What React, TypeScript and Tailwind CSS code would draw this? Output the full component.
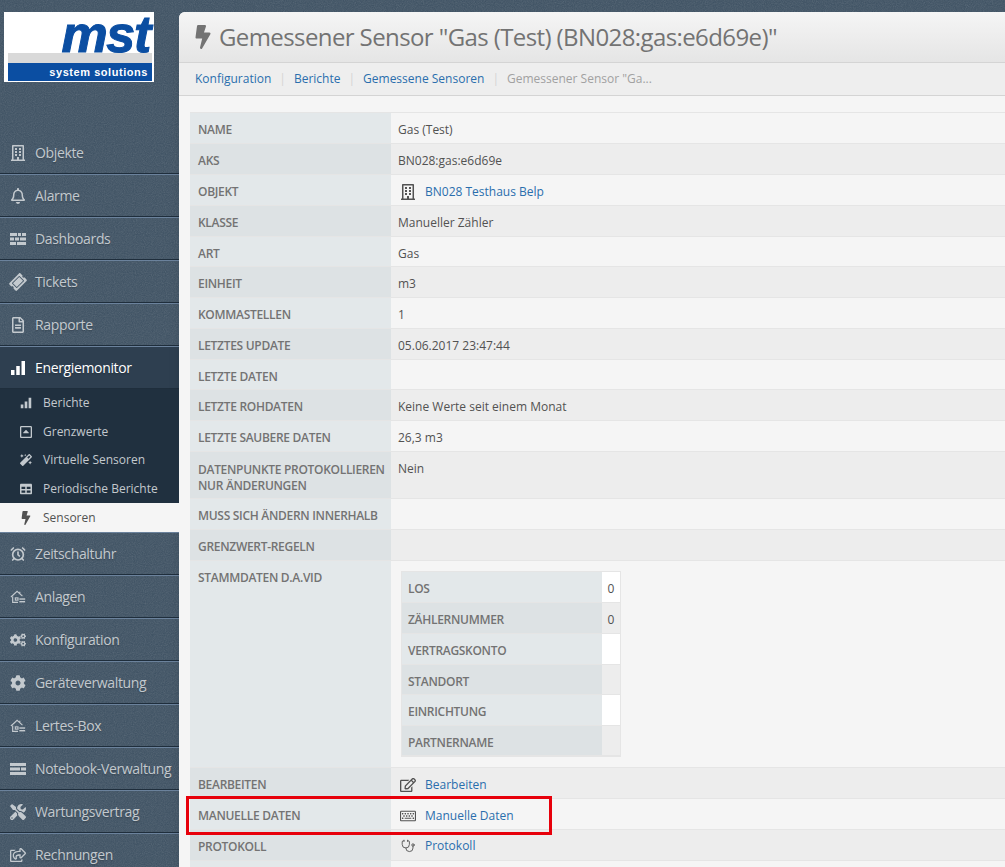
import React from "react";
import {
  FaRegBuilding, FaRegBell, FaTicketAlt, FaRegFileAlt, FaBolt, FaMagic, FaTable,
  FaCogs, FaCog, FaTools, FaRegShareSquare, FaRegEdit, FaRegKeyboard,
  FaRegCaretSquareUp,
} from "react-icons/fa";
import { AlarmClock, Stethoscope } from "lucide-react";

const font = { fontFamily: '"Open Sans", "DejaVu Sans", sans-serif' };

const Bars = () => (
  <svg viewBox="0 0 16 16" width="1em" height="1em" fill="currentColor">
    <rect x="1" y="10" width="3.5" height="5" />
    <rect x="6.25" y="6" width="3.5" height="9" />
    <rect x="11.5" y="1" width="3.5" height="14" />
  </svg>
);
const Bricks = () => (
  <svg viewBox="0 0 16 16" width="1em" height="1em" fill="currentColor">
    <rect x="0" y="2" width="7" height="3" /><rect x="8" y="2" width="3" height="3" /><rect x="12" y="2" width="4" height="3" />
    <rect x="0" y="6.5" width="4" height="3" /><rect x="5" y="6.5" width="4" height="3" /><rect x="10" y="6.5" width="6" height="3" />
    <rect x="0" y="11" width="6" height="3" /><rect x="7" y="11" width="9" height="3" />
  </svg>
);
const Stack = () => (
  <svg viewBox="0 0 16 16" width="1em" height="1em" fill="currentColor">
    <rect x="0" y="2" width="16" height="3" /><rect x="0" y="6.5" width="10" height="3" /><rect x="11" y="6.5" width="5" height="3" /><rect x="0" y="11" width="16" height="3" />
  </svg>
);
const HouseKey = () => (
  <svg viewBox="0 0 18 16" width="1.1em" height="1em" fill="none" stroke="currentColor" strokeWidth="1.3">
    <path d="M1 8 L8 1.5 L14 7" />
    <path d="M11 2 V4" />
    <path d="M3 7.5 V14 H9" />
    <rect x="6" y="9" width="3" height="2.5" />
    <rect x="10.5" y="9.5" width="6.5" height="1.6" fill="currentColor" stroke="none" />
    <rect x="10.5" y="12.5" width="6.5" height="1.6" fill="currentColor" stroke="none" />
  </svg>
);
const Clock = () => <AlarmClock size="1em" strokeWidth={2.5} />;
const Steth = () => <Stethoscope size="0.9em" strokeWidth={1.5} />;

function Nav({ icon: Icon, label, active = false, first = false }: { icon: any; label: string; active?: boolean; first?: boolean }) {
  return (
    <div
      className={`flex h-[43px] items-center gap-2.25 whitespace-nowrap pl-2.5 text-sm tracking-tight text-shadow-sm border-b border-b-[#1f2e3c] border-t ${first ? "border-t-transparent" : "border-t-[#6b829c]"} ${active ? "bg-[#2e3f50] text-white" : "text-[#c3c9ce]"}`}
    >
      <span className="flex w-4 justify-center text-base"><Icon /></span>
      <span>{label}</span>
    </div>
  );
}

function Sub({ icon: Icon, label, active = false }: { icon: any; label: string; active?: boolean }) {
  return (
    <div className={`flex items-center gap-2.75 pl-5 text-xs ${active ? "bg-neutral-100 text-neutral-600" : "text-[#c3c9ce]"}`}>
      <span className="flex w-3 justify-center text-sm"><Icon /></span>
      <span>{label}</span>
    </div>
  );
}

type RowT = { k: React.ReactNode; id: string; v?: React.ReactNode; tight?: boolean };

function Link({ icon: Icon, children }: { icon: any; children: React.ReactNode }) {
  return (
    <span className="-my-px ml-0.5 flex items-center gap-2.25">
      <span className="flex w-4 justify-center text-base text-neutral-600"><Icon /></span>
      <span className="text-[#2a6ead]">{children}</span>
    </span>
  );
}

function Row({ k, v, even, inner, two, tight }: { k: React.ReactNode; v?: React.ReactNode; even: boolean; inner?: boolean; two?: boolean; tight?: boolean }) {
  const pb = tight ? "pb-1.25" : "pb-1.5";
  return (
    <div className={`flex border-b border-neutral-200 ${even ? "bg-neutral-100" : "bg-[#ededed]"}`}>
      <div className={`${inner ? "flex-1 px-1.5" : "w-[201px] shrink-0 px-2"} whitespace-nowrap pt-2.5 text-xs font-semibold uppercase tracking-tight ${two ? "pb-1 leading-4" : `${pb} leading-3.5`} text-neutral-500 ${even ? "bg-[#e3e8ea]" : "bg-[#dde2e4]"}`}>
        {k}
      </div>
      <div className={`${inner ? "w-[18px] text-center" : "flex-1 pl-1.75"} ${pb} pt-2.5 text-xs leading-3.5 text-neutral-600 ${inner && even ? "bg-white" : ""}`}>{v}</div>
    </div>
  );
}

const nestedRows = [
  ["Los", "0"], ["Zählernummer", "0"], ["Vertragskonto", ""], ["Standort", ""], ["Einrichtung", ""], ["Partnername", ""],
];

export default function App() {
  const rows: RowT[] = [
    { id: "a", k: "Name", v: "Gas (Test)" },
    { id: "b", k: "AKS", v: "BN028:gas:e6d69e" },
    { id: "c", k: "Objekt", v: <Link icon={FaRegBuilding}>BN028 Testhaus Belp</Link> },
    { id: "d", k: "Klasse", v: "Manueller Zähler" },
    { id: "e", k: "Art", v: "Gas", tight: true },
    { id: "f", k: "Einheit", v: "m3" },
    { id: "g", k: "Kommastellen", v: "1" },
    { id: "h", k: "Letztes Update", v: "05.06.2017 23:47:44" },
    { id: "i", k: "Letzte Daten", tight: true },
    { id: "j", k: "Letzte Rohdaten", v: "Keine Werte seit einem Monat" },
    { id: "k", k: "Letzte saubere Daten", v: "26,3 m3" },
    { id: "two", k: <>Datenpunkte protokollieren<br />nur Änderungen</>, v: "Nein" },
    { id: "m", k: "Muss sich ändern innerhalb" },
    { id: "n", k: "Grenzwert-Regeln" },
  ];
  const after: RowT[] = [
    { id: "p", k: "Bearbeiten", v: <Link icon={FaRegEdit}>Bearbeiten</Link> },
    { id: "q", k: "Manuelle Daten", v: <Link icon={FaRegKeyboard}>Manuelle Daten</Link> },
    { id: "r", k: "Protokoll", v: <Link icon={Steth}>Protokoll</Link> },
    { id: "s", k: "" },
  ];
  return (
    <div className="relative flex h-[867px] overflow-hidden bg-[#3c5062]" style={font}>
      <svg className="absolute inset-0 h-full w-full opacity-20" aria-hidden="true">
        <filter id="grain">
          <feTurbulence type="fractalNoise" baseFrequency="0.9" numOctaves="2" />
          <feColorMatrix type="saturate" values="0" />
        </filter>
        <rect width="100%" height="100%" filter="url(#grain)" />
      </svg>
      <aside className="relative w-[179px] shrink-0">
        <div className="ml-1 mt-3 flex h-[70px] w-[150px] flex-col bg-white">
          <div className="flex h-[41px] justify-end pr-1 pt-0.5">
            <span className="text-[52px] font-bold italic leading-10 tracking-tight text-[#0b4ea2] [-webkit-text-stroke:1px_#0b4ea2]" style={{ fontFamily: '"Liberation Sans", sans-serif' }}>mst</span>
          </div>
          <div className="ml-1 h-2.5 w-[144px] bg-[#d9d9d9]" />
          <div className="ml-1 flex h-[18px] w-[144px] items-center justify-end bg-[#0b4ea2] pr-1 text-[11px] font-bold tracking-wider text-white" style={{ fontFamily: '"Liberation Sans", sans-serif' }}>
            system solutions
          </div>
        </div>
        <div className="mt-[49px]">
          <Nav first icon={FaRegBuilding} label="Objekte" />
          <Nav icon={FaRegBell} label="Alarme" />
          <Nav icon={Bricks} label="Dashboards" />
          <Nav icon={() => <FaTicketAlt className="-rotate-45" />} label="Tickets" />
          <Nav icon={FaRegFileAlt} label="Rapporte" />
          <Nav active icon={Bars} label="Energiemonitor" />
          <div className="relative z-20 grid h-[143px] grid-rows-5 bg-[#20303f]">
            <Sub icon={Bars} label="Berichte" />
            <Sub icon={FaRegCaretSquareUp} label="Grenzwerte" />
            <Sub icon={FaMagic} label="Virtuelle Sensoren" />
            <Sub icon={FaTable} label="Periodische Berichte" />
            <Sub active icon={FaBolt} label="Sensoren" />
          </div>
          <Nav icon={Clock} label="Zeitschaltuhr" />
          <Nav icon={HouseKey} label="Anlagen" />
          <Nav icon={FaCogs} label="Konfiguration" />
          <Nav icon={FaCog} label="Geräteverwaltung" />
          <Nav icon={HouseKey} label="Lertes-Box" />
          <Nav icon={Stack} label="Notebook-Verwaltung" />
          <Nav icon={FaTools} label="Wartungsvertrag" />
          <Nav icon={FaRegShareSquare} label="Rechnungen" />
        </div>
      </aside>
      <main className="relative z-10 mt-3 min-w-0 flex-1 rounded-tl-md bg-neutral-100 shadow-lg">
        <div className="flex h-[51px] items-center gap-1 rounded-tl-md border-b border-neutral-300 bg-gradient-to-b from-neutral-100 to-neutral-200 pl-3 text-2xl tracking-tight text-neutral-500">
          <FaBolt />
          <span className="whitespace-nowrap">Gemessener Sensor "Gas (Test) (BN028:gas:e6d69e)"</span>
        </div>
        <div className="flex h-[33px] items-center border-b border-neutral-300 bg-[#eeeeee] pl-4 text-xs">
          <span className="text-[#2a6ead]">Konfiguration</span>
          <span className="mx-2 text-neutral-300">|</span>
          <span className="text-[#2a6ead]">Berichte</span>
          <span className="mx-2 text-neutral-300">|</span>
          <span className="text-[#2a6ead]">Gemessene Sensoren</span>
          <span className="mx-2 text-neutral-300">|</span>
          <span className="text-neutral-400">Gemessener Sensor "Ga...</span>
        </div>
        <div className="ml-[11px] mt-4 border-t border-neutral-200">
          {rows.map((r, i) => <Row key={r.id} k={r.k} v={r.v} tight={r.tight} two={r.id === "two"} even={i % 2 === 0} />)}
          <div className="flex border-b border-neutral-200 bg-neutral-100">
            <div className="w-[201px] shrink-0 bg-[#e3e8ea] px-2 pt-2.5 text-xs font-semibold uppercase leading-3.5 tracking-tight text-neutral-500">Stammdaten d.a.vid</div>
            <div className="flex-1 py-2.5 pl-2.5">
              <div className="w-[220px] border border-neutral-200">
                {nestedRows.map((r, i) => <Row key={r[0]} inner tight={i === 3 || i === 5} k={r[0]} v={r[1]} even={i % 2 === 0} />)}
              </div>
            </div>
          </div>
          {after.map((r, i) => <Row key={r.id} k={r.k} v={r.v} even={i % 2 === 1} />)}
        </div>
      </main>
      <div className="absolute left-[186px] top-[796px] z-30 h-[39px] w-[366px] border-[3px] border-red-600" />
    </div>
  );
}
